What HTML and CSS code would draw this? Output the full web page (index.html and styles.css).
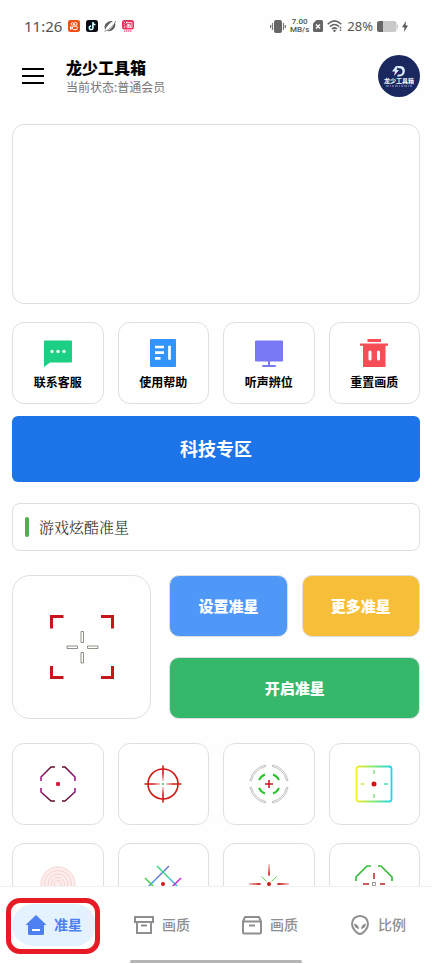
FILE: index.html
```html
<!DOCTYPE html>
<html lang="zh-CN">
<head>
<meta charset="utf-8">
<meta name="viewport" content="width=device-width, initial-scale=1">
<title>龙少工具箱</title>
<link rel="stylesheet" href="styles.css">
</head>
<body>
<div class="status">
  <div class="status-group left">
    <span class="clock">11:26</span>
    <svg width="12" height="12" viewBox="0 0 12 12"><rect width="12" height="12" rx="2.5" fill="#ee4f12"/><g fill="none" stroke="#fff"><circle cx="4.5" cy="4" r="1.3"/><circle cx="7.6" cy="3.8" r="1.5"/><rect x="4.6" y="6.2" width="4.6" height="3.4" rx="1"/><path d="M2.5 6.5L4.6 7.9L2.5 9.4z"/></g></svg>
    <svg width="12" height="12" viewBox="0 0 12 12"><rect width="12" height="12" rx="2.5" fill="#0b0b14"/><path d="M6.8 2v5.7a1.8 1.8 0 1 1-1.8-1.8M6.8 2.5c.2 1.3 1.2 2 2.5 2.1" fill="none" stroke="#4de" stroke-width="1.5"/><path d="M7 2.3v5.6a1.8 1.8 0 1 1-1.8-1.8M7 2.8c.2 1.3 1.2 2 2.4 2.1" fill="none" stroke="#fff" stroke-width="1.2"/></svg>
    <svg width="12" height="12" viewBox="0 0 12 12"><path d="M1.2 9.8C-1 5 3 .2 9 1C6 2.800 3 5.500 1.200 9.800zM10.800 2.200C13 7 8.500 12 3 11C6.500 9.500 9.500 6.500 10.800 2.200z" fill="#5c5c5c"/><path d="M.4 11.200C3 11.500 11 5 11.700 .8" fill="none" stroke="#777" stroke-width=".8"/></svg>
    <svg width="12" height="12" viewBox="0 0 12 12"><rect width="12" height="9.500" rx="2.500" fill="#e8305f"/><path d="M2 2l1 1M1.800 4.500l1 .6M2 8l1.200-2M5 1.500L4 3.500M4.600 2.600H10V7.500H8.500M5 4.400H8.500M4.600 5.700H9M6.700 4.400V7.200M5 6v1.400h3.400V6" stroke="#fff" stroke-width=".8" fill="none"/><path d="M2 11h8" stroke="#e86a9a" stroke-width="1.500" stroke-dasharray="1.500 .5"/></svg>
  </div>
  <div class="status-group right">
    <svg width="16" height="13" viewBox="0 0 16 13"><rect x="4" width="8" height="13" rx="2" fill="#666"/><path d="M2.500 3v7M13.500 3v7M.6 5v3M15.400 5v3" stroke="#777" stroke-width="1.200"/></svg>
    <div class="speed"><span>7.00</span><span>MB/s</span></div>
    <svg width="10" height="12" viewBox="0 0 10 12"><path d="M3.500 0H8.500Q10 0 10 1.500V10.500Q10 12 8.500 12H1.500Q0 12 0 10.500V3.500z" fill="#666"/><path d="M3 4.500l4 4M7 4.500l-4 4" stroke="#fff" stroke-width="1.400"/></svg>
    <svg width="16" height="12" viewBox="0 0 16 12"><g fill="none" stroke="#666" stroke-width="1.500"><path d="M.7 4.200Q7.500-2.400 14.300 4.200M2.800 6.700Q7.500 2.300 12.200 6.700M5 9Q7.500 6.700 10 9"/></g><circle cx="7.500" cy="10.800" r="1.200" fill="#666"/><path d="M13.500 7v4" stroke="#666" stroke-width="1.500" stroke-dasharray="1.500 1"/></svg>
    <span class="percent">28%</span>
    <svg width="21" height="11" viewBox="0 0 21 11"><rect width="19.500" height="11" rx="2.500" fill="#c9c9c9"/><rect x="20" y="3.500" width="1" height="4" fill="#c9c9c9"/><path d="M2.500 0H6V11H2.500Q0 11 0 8.500V2.500Q0 0 2.500 0z" fill="#666"/></svg>
    <svg width="6" height="11" viewBox="0 0 6 11"><path d="M4 0L0 6.200H2.500L2 11L6 4.500H3.500z" fill="#555"/></svg>
  </div>
</div>

<header class="header">
  <button class="menu" aria-label="菜单"><svg width="22" height="16" viewBox="0 0 22 16"><path d="M0 1h22M0 8h22M0 15h22" stroke="#000" stroke-width="2"/></svg></button>
  <div class="heading">
    <h1>龙少工具箱</h1>
    <p>当前状态:普通会员</p>
  </div>
  <div class="avatar">
    <svg width="14" height="11" viewBox="0 0 14 11"><path d="M6 0H8.500C15 .5 14 10.500 7.500 10.500H5L6 8.500H8C11.300 8 11.500 2.700 8 2.200H5.500z" fill="#dceeff"/><path d="M4 0L0 5.500H3L2 10L7 4H4.500L6 0z" fill="#dceeff"/></svg>
    <span class="avatar-name">龙少工具箱</span>
    <svg width="28" height="2" viewBox="0 0 28 2"><path d="M1 1h26" stroke="#9aa8d0" stroke-dasharray="3 1 1 1 2 1"/></svg>
  </div>
</header>

<main class="content">
  <section class="banner"></section>

  <div class="grid actions">
    <button class="tile action"><svg width="30" height="30" viewBox="0 0 30 30"><path d="M1 4.500Q1 3.500 2 3.500H28Q29 3.500 29 4.500V24.500Q29 25.500 28 25.500H7L1 30z" fill="#1bd085"/><g fill="#e8fff4"><circle cx="9" cy="14.500" r="1.700"/><circle cx="15" cy="14.500" r="1.700"/><circle cx="21" cy="14.500" r="1.700"/></g></svg><span>联系客服</span></button>
    <button class="tile action"><svg width="30" height="30" viewBox="0 0 30 30"><rect x="2" y="2" width="26" height="28" rx="1" fill="#3294fa"/><path d="M7 10h9M7 15.700h9M7 21.400h5.500M21.500 8.700v14" stroke="#fff" stroke-width="2.700"/></svg><span>使用帮助</span></button>
    <button class="tile action"><svg width="30" height="30" viewBox="0 0 30 30"><rect x="1" y="3.500" width="28" height="21" rx="1" fill="#7b78f5"/><path d="M15 24v5M9 29h12" stroke="#7b78f5" stroke-width="2" stroke-linecap="round"/></svg><span>听声辨位</span></button>
    <button class="tile action"><svg width="30" height="30" viewBox="0 0 30 30"><path d="M8.500 2h13.500v3H8.500zM1 6.500h28v2.200H26.500V30H4V8.700H1z" fill="#f64d56"/><path d="M11 15v7M19.500 15v7" stroke="#fff" stroke-width="3" stroke-linecap="round"/></svg><span>重置画质</span></button>
  </div>

  <button class="zone">科技专区</button>

  <h2 class="section-title">游戏炫酷准星</h2>

  <div class="control">
    <div class="preview">
      <svg width="64" height="64" viewBox="0 0 64 64"><g fill="none" stroke="#c9141b" stroke-width="3"><path d="M1.500 13.500V1.500H13.500M51 1.500H62.500V13.500M1.500 51V62.500H13.500M51 62.500H62.500V51"/></g><g fill="#fff" stroke="#777568" stroke-width=".8"><path d="M31 16.500h2.500v11H31zM31 37.500h2.500v10.500H31zM17 31h10.500v2.500H17zM37.500 31h10.500v2.500H37.500z"/></g></svg>
    </div>
    <div class="buttons">
      <button class="btn blue">设置准星</button>
      <button class="btn yellow">更多准星</button>
      <button class="btn green">开启准星</button>
    </div>
  </div>

  <div class="grid sights">
    <button class="tile" aria-label="准星 1"><svg width="40" height="40" viewBox="0 0 40 40"><defs><linearGradient id="plum" x1="0" y1="0" x2="0" y2="40" gradientUnits="userSpaceOnUse"><stop offset="0" stop-color="#501018"/><stop offset=".4" stop-color="#a00c88"/><stop offset=".6" stop-color="#a00c88"/><stop offset="1" stop-color="#501018"/></linearGradient></defs><path d="M17 3H13L3 13V17M24 3H27L37 13V17M3 24V28L13 37H17M24 37H27L37 28V24" fill="none" stroke="url(#plum)" stroke-width="1.500"/><circle cx="20" cy="20" r="2.200" fill="#d21f45"/></svg></button>
    <button class="tile" aria-label="准星 2"><svg width="40" height="40" viewBox="0 0 40 40"><circle cx="20" cy="20" r="15" fill="none" stroke="#cf1b17" stroke-width="1.600"/><g fill="#cf1b17"><path id="spike" d="M19.200 1.500h1.600v8L20.200 17h-.4L19.200 9.500z"/><use href="#spike" transform="rotate(90 20 20)"/><use href="#spike" transform="rotate(180 20 20)"/><use href="#spike" transform="rotate(270 20 20)"/></g><circle cx="20" cy="20" r="1" fill="#2cc65b"/></svg></button>
    <button class="tile" aria-label="准星 3"><svg width="40" height="40" viewBox="0 0 40 40"><g fill="none"><g stroke="#999" stroke-width=".6"><path id="arc" d="M1 16.500A19.300 19.300 0 0 1 16.500 1V2.600A17.600 17.600 0 0 0 2.600 16.500z"/><use href="#arc" transform="rotate(90 20 20)"/><use href="#arc" transform="rotate(180 20 20)"/><use href="#arc" transform="rotate(270 20 20)"/></g><path d="M10 16Q12 12 16 10.500M24 10.500Q28 12 30 16M10 24Q12 28 16 29.500M24 29.500Q28 28 30 24" stroke="#2fc32e" stroke-width="2"/><path d="M20 16v8M16 20h8" stroke="#c5161c" stroke-width="1.500"/></g></svg></button>
    <button class="tile" aria-label="准星 4"><svg width="40" height="40" viewBox="0 0 40 40"><defs><linearGradient id="rainbow"><stop offset="0" stop-color="#f5ee2a"/><stop offset=".5" stop-color="#80e87c"/><stop offset="1" stop-color="#1fd5e5"/></linearGradient></defs><rect x="2.500" y="2.500" width="35" height="35" rx="2.500" fill="none" stroke="url(#rainbow)" stroke-width="1.800"/><path d="M20 6v4M20 30v4" stroke="#6ee06a" stroke-width="1.300"/><path d="M6.500 20h4" stroke="#d5df35" stroke-width="1.300"/><path d="M30 20h4" stroke="#35d6b0" stroke-width="1.300"/><circle cx="20" cy="20" r="2.500" fill="#d51212"/></svg></button>
    <button class="tile" aria-label="准星 5"><svg width="40" height="40" viewBox="0 0 40 40"><circle cx="20" cy="20" r="17" fill="#fdeeee"/><g fill="none" stroke="#f9d2d2"><circle cx="20" cy="20" r="17"/><circle cx="20" cy="20" r="13.500"/><circle cx="20" cy="20" r="10"/><circle cx="20" cy="20" r="6.500"/><circle cx="20" cy="20" r="3.500"/></g></svg></button>
    <button class="tile" aria-label="准星 6"><svg width="40" height="40" viewBox="0 0 40 40"><g fill="none" stroke-width="1.500"><path d="M26 2L13 15" stroke="#6573d5"/><path d="M13 15L2 26" stroke="#4c9be0"/><path d="M14 2L26 14" stroke="#3dd682"/><path d="M26 14L38 26" stroke="#46b7e0"/><path d="M38 14L32 20L26 26" stroke="#bc25cf"/><path d="M2 14L14 26" stroke="#49cf4f"/></g><circle cx="20" cy="20" r="2" fill="#d01818"/></svg></button>
    <button class="tile" aria-label="准星 7"><svg width="40" height="40" viewBox="0 0 40 40"><g fill="#c91b16"><path id="needle" d="M19.800 0h.4L20.900 11.500h-1.800z"/><use href="#needle" transform="rotate(90 20 20)"/><use href="#needle" transform="rotate(180 20 20)"/><use href="#needle" transform="rotate(270 20 20)"/><circle cx="20" cy="20" r="2"/></g><path d="M12.500 12.500l5 5M27.500 12.500l-5 5" stroke="#5fd85a"/></svg></button>
    <button class="tile" aria-label="准星 8"><svg width="40" height="40" viewBox="0 0 40 40"><g fill="none"><path d="M17 2H13L2 13V17M24 2H27L38 13V17M2 24V28L13 38H17M24 38H27L38 28V24" stroke="#35bd36" stroke-width="1.700"/><path d="M20 9v6M20 25v6M9 20h6M26 20h5" stroke="#b52323" stroke-width="1.500"/><rect x="18.500" y="18.500" width="3" height="3" stroke="#777" stroke-width=".7"/></g></svg></button>
  </div>
</main>

<nav class="tabs">
  <a class="tab active" href="#sight"><svg width="20" height="20" viewBox="0 0 20 20"><path d="M10 0L20.500 10H18V18.500Q18 20 16.500 20H3.500Q2 20 2 18.500V10H-.5z" fill="#4e80f2"/><path d="M6 15h8" stroke="#fff" stroke-width="2"/></svg><span>准星</span></a>
  <a class="tab" href="#quality"><svg width="20" height="20" viewBox="0 0 20 20"><g fill="none" stroke="#8f8f8f" stroke-width="2"><rect x="1" y="2" width="18" height="5"/><path d="M3 7V18H17V7M7 10.500h6"/></g></svg><span>画质</span></a>
  <a class="tab" href="#quality-more"><svg width="20" height="20" viewBox="0 0 20 20"><g fill="none" stroke="#8f8f8f" stroke-width="2" stroke-linejoin="round"><path d="M1 6.500L3 2H17L19 6.500V17.500Q19 18.500 18 18.500H2Q1 18.500 1 17.500zM1 6.500H19M7 10.500h6"/></g></svg><span>画质</span></a>
  <a class="tab" href="#ratio"><svg width="20" height="20" viewBox="0 0 20 20"><path d="M10 1C5 1 2 4.500 2 9C2 13.500 7 19 10 19S18 13.500 18 9C18 4.500 15 1 10 1z" fill="none" stroke="#8f8f8f" stroke-width="2"/><path d="M4 8.500Q9 9.500 9 14Q4.500 13.500 4 8.500zM16 8.500Q11 9.500 11 14Q15.500 13.500 16 8.500z" fill="#8f8f8f"/></svg><span>比例</span></a>
  <div class="home-bar"></div>
</nav>
</body>
</html>
```
FILE: styles.css
```css
* {
  box-sizing: border-box;
}

body {
  margin: 0;
  height: 100vh;
  display: flex;
  flex-direction: column;
  overflow: hidden;
  background: #fefefe;
  color: #000;
  font-family: "Noto Sans", "Noto Sans CJK SC", sans-serif;
}

button {
  margin: 0;
  padding: 0;
  font-family: inherit;
  color: inherit;
  cursor: pointer;
}

svg {
  display: block;
  flex: none;
  overflow: visible;
}

h1,
h2,
p {
  margin: 0;
}

.status {
  flex: none;
  display: flex;
  align-items: center;
  justify-content: space-between;
  height: 52px;
  padding: 0 24px;
  color: #555;
}

.status-group {
  display: flex;
  align-items: center;
}

.left {
  gap: 6px;
}

.right {
  gap: 4px;
}

.clock {
  font-size: 15px;
}

.speed {
  display: flex;
  flex-direction: column;
  align-items: center;
  font-family: Roboto, sans-serif;
  font-size: 8px;
  line-height: 8px;
  font-weight: 500;
}

.percent {
  font-size: 13px;
}

.header {
  flex: none;
  display: flex;
  align-items: center;
  height: 48px;
  padding: 0 12px 0 22px;
}

.menu {
  border: 0;
  background: none;
}

.heading {
  flex: 1;
  margin-left: 22px;
  padding-top: 2px;
}

.heading h1 {
  font-size: 16px;
  line-height: 22px;
  font-weight: 900;
}

.heading p {
  font-size: 12px;
  line-height: 18px;
  color: #777;
}

.avatar {
  width: 42px;
  height: 42px;
  border-radius: 50%;
  background: #1b2860;
  color: #fff;
  display: flex;
  flex-direction: column;
  align-items: center;
  justify-content: center;
}

.avatar-name {
  font-size: 6px;
  line-height: 8px;
  font-weight: 700;
}

.content {
  flex: 1;
  min-height: 0;
  overflow: hidden;
  padding: 24px 12px 0;
}

.banner {
  height: 180px;
  border: 1px solid #dfdfdf;
  border-radius: 12px;
}

.grid {
  display: grid;
  grid-template-columns: repeat(4, 1fr);
  gap: 18px 14px;
}

.actions {
  margin-top: 18px;
}

.tile {
  height: 82px;
  border: 1px solid #dfdfdf;
  border-radius: 12px;
  background: #fff;
  display: flex;
  flex-direction: column;
  align-items: center;
  justify-content: center;
}

.action {
  gap: 7px;
  padding-top: 2px;
  font-size: 12px;
  line-height: 18px;
  font-weight: 700;
}

.zone {
  display: block;
  width: 100%;
  height: 66px;
  margin-top: 12px;
  border: 0;
  border-radius: 6px;
  background: #1d74e8;
  color: #fff;
  font-size: 18px;
  line-height: 24px;
  font-weight: 700;
}

.section-title {
  display: flex;
  align-items: center;
  gap: 10px;
  height: 48px;
  margin-top: 21px;
  padding-left: 12px;
  border: 1px solid #dfdfdf;
  border-radius: 8px;
  color: #222;
  font-family: "Noto Serif CJK SC", "Noto Sans CJK SC", serif;
  font-size: 15px;
  line-height: 20px;
  font-weight: 300;
}

.section-title::before {
  content: "";
  width: 4px;
  height: 20px;
  border-radius: 2px;
  background: #4caf50;
}

.control {
  display: grid;
  grid-template-columns: 5fr 9fr;
  gap: 18px;
  margin-top: 24px;
}

.preview {
  display: flex;
  align-items: center;
  justify-content: center;
  border: 1px solid #dfdfdf;
  border-radius: 18px;
}

.buttons {
  display: grid;
  grid-template-columns: 1fr 1fr;
  gap: 20px 14px;
}

.btn {
  height: 62px;
  border: 1px solid #dfdfdf;
  border-radius: 10px;
  color: #fff;
  font-size: 15px;
  line-height: 20px;
  font-weight: 900;
}

.blue {
  background: #4f98f8;
}

.yellow {
  background: #f7bf39;
}

.green {
  grid-column: 1 / -1;
  background: #35b869;
}

.sights {
  margin-top: 24px;
}

.tabs {
  position: relative;
  flex: none;
  display: grid;
  grid-template-columns: repeat(4, 1fr);
  height: 78px;
  background: #fff;
  border-top: 1px solid #f0f0f0;
}

.tab {
  position: relative;
  display: flex;
  align-items: center;
  justify-content: center;
  gap: 8px;
  height: 42px;
  margin: 17px 12px 0;
  border-radius: 21px;
  color: #8f8f8f;
  font-size: 14px;
  line-height: 20px;
  font-weight: 500;
  text-decoration: none;
}

.active {
  background: #e4f1fe;
  color: #4e80f2;
  font-weight: 700;
}

.active::after {
  content: "";
  position: absolute;
  inset: -6px -4px -8px -6px;
  border: 5px solid #e71b25;
  border-radius: 14px;
}

.home-bar {
  position: absolute;
  bottom: 1px;
  left: 30%;
  right: 30%;
  height: 3px;
  border-radius: 2px;
  background: #b5b5b5;
}
```
